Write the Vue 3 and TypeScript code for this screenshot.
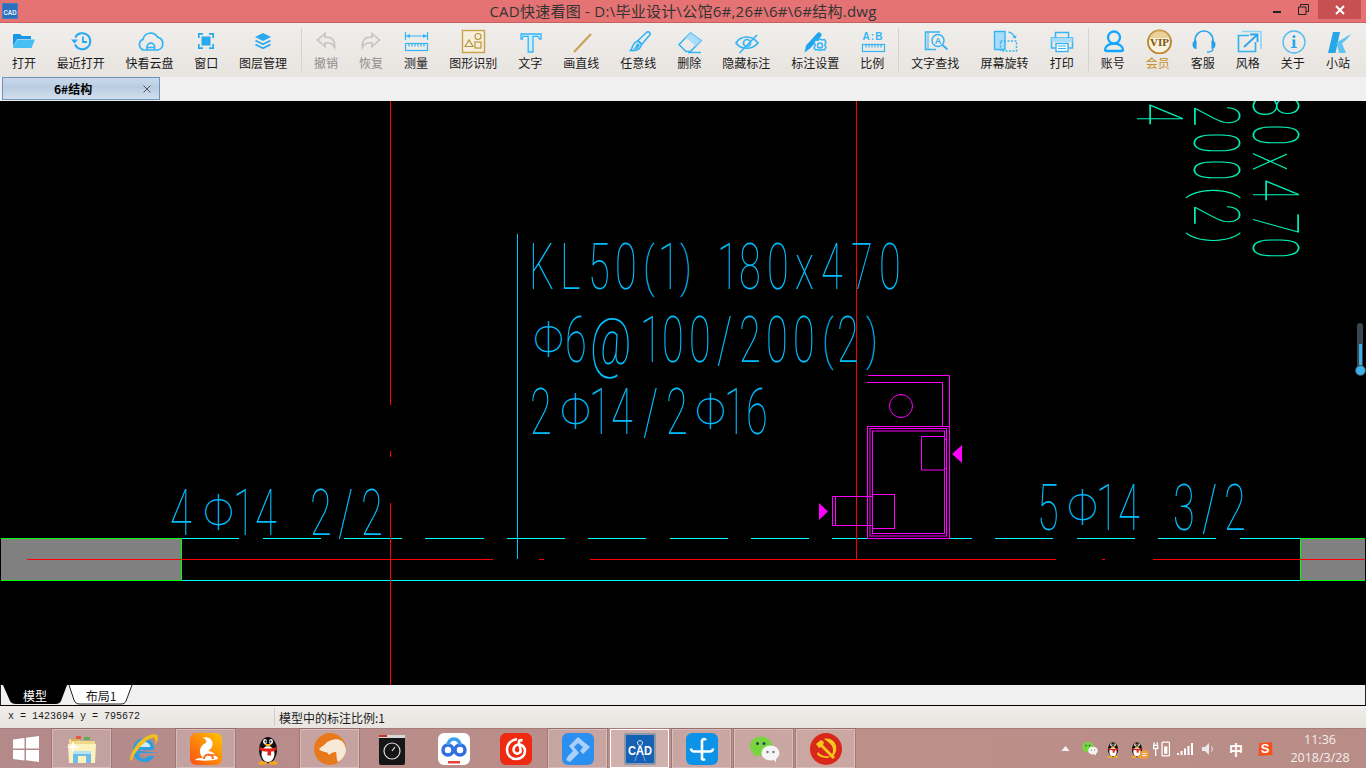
<script setup lang="ts">
interface ToolItem {
  label: string
  icon: string
  muted?: boolean
  gold?: boolean
}

const blue = '#29a9ef'

// 工具栏图标
const icons: Record<string, string> = {
  open: `<path d="M4 7a1 1 0 0 1 1-1h6l2 2h9v3H8l-4 8z" fill="#1b96e6"/><path d="M4 20l4-8.500h18L22.500 20z" fill="#45bdf5"/>`,
  recent: `<g fill="none" stroke="${blue}" stroke-width="2"><path d="M9.200 9.500A8 8 0 1 1 9 16.500"/><path d="M17 8.500V14h4" stroke-width="1.800"/></g><path d="M5 11.500h7l-3.500 4z" fill="${blue}"/>`,
  cloud: `<g fill="none" stroke="#35b4f5" stroke-width="1.700"><path d="M9.500 22a5.500 5.500 0 0 1-1.500-10.600 7.800 7.800 0 0 1 14.500-2.200A6.600 6.600 0 0 1 23 22z"/><path d="M12 22v-3a3.800 3.800 0 0 1 7.600 0v3M12 19.500h7.600"/></g>`,
  window: `<g fill="none" stroke="${blue}" stroke-width="1.700"><path d="M7.800 10V5.800H12M18 5.800h4.200V10M22.200 16v4.200H18M12 20.200H7.800V16"/></g><rect x="10.500" y="8.500" width="9" height="9" fill="${blue}"/>`,
  layers: `<path d="M15 5l8 4-8 4-8-4z" fill="${blue}"/><g fill="none" stroke="${blue}" stroke-width="1.800"><path d="M7.500 12.500l7.500 3.800 7.500-3.800"/><path d="M7.500 16.500l7.500 3.800 7.500-3.800"/></g>`,
  undo: `<path d="M14 5.500L6.500 12l7.500 6.500V15h3.500c2.500 0 4.500 1.300 6 4.500 1-6-2-10.200-7-10.200H14z" fill="none" stroke="#c4c4c4" stroke-width="1.600"/>`,
  redo: `<path d="M16 5.500L23.500 12 16 18.500V15h-3.500c-2.500 0-4.500 1.300-6 4.500-1-6 2-10.200 7-10.200H16z" fill="none" stroke="#c4c4c4" stroke-width="1.600"/>`,
  measure: `<g fill="none" stroke="#35b4f5" stroke-width="1.200"><path d="M4.500 4v8M26.500 4v8M5 8h21"/><rect x="4.500" y="15.500" width="22" height="7"/><path d="M8 15.500v3M11 15.500v3M14 15.500v3M17 15.500v3M20 15.500v3M23 15.500v3"/></g><path d="M5 8l4-2v4zM26 8l-4-2v4z" fill="#35b4f5"/>`,
  shape: `<rect x="4.500" y="2.500" width="22" height="22" fill="#f6efdc" stroke="#c9a24d" stroke-width="1.400"/><g fill="none" stroke="#b99440" stroke-width="1.200"><path d="M7 18.500l4-6.500 4 6.500z"/><circle cx="20" cy="8.500" r="3"/><rect x="17" y="14" width="6" height="6"/></g>`,
  text: `<path d="M6 6h20v5h-1.500l-1.500-2.700h-5V24h-4.800V8.300H8L7.500 11H6z" fill="#cdeefd" stroke="#35b4f5" stroke-width="1.300"/>`,
  line: `<path d="M25 6L8 24" stroke="#c9a458" stroke-width="2.200"/>`,
  pen: `<path d="M15 12.500l8.500-8a2 2 0 0 1 3 2.800L19 16z" fill="none" stroke="#35b4f5" stroke-width="1.600"/><path d="M14.500 13l4 3.500c-1 4-5 6.500-11 6 2.500-2 1.500-7.500 7-9.500z" fill="none" stroke="#35b4f5" stroke-width="1.600"/><path d="M14 15c-1 3-2 5-4 6.500 3 .3 5.500-1.500 7-4.500z" fill="#35b4f5"/>`,
  eraser: `<path d="M5 16.500L16.500 5 27 12.500 16.500 23.500H12z" fill="none" stroke="#35b4f5" stroke-width="1.600"/><path d="M12 9.500L16.500 5 27 12.500 21.500 18z" fill="#a8dcf8"/><path d="M14 24.500h13" stroke="#35b4f5" stroke-width="1.500"/>`,
  eye: `<g fill="none" stroke="#35b4f5" stroke-width="1.700"><path d="M5 15c5-8 16-8 22 0-6 7-17 7-22 0z"/><circle cx="16" cy="15" r="3.500"/><path d="M8.500 25L26 7"/></g>`,
  markset: `<path d="M4.500 24.500l1.500-7L17 5.500a2.500 2.500 0 0 1 4 3L10 20.500z" fill="#1fa5ee"/><path d="M20 11l2 1 2.500-.5 1.500 2.500-1 2v1.500l1 2-1.500 2.500-2.500-.5-2 1-2-1-2.500.5L14 20l1-2v-1.500l-1-2 1.500-2.500 2.500.5z" fill="#eee" stroke="#35b4f5" stroke-width="1.500"/><circle cx="20" cy="17.500" r="2.500" fill="none" stroke="#35b4f5" stroke-width="1.500"/>`,
  scale: `<text x="16" y="12" text-anchor="middle" font-family="Liberation Sans" font-size="10" font-weight="700" fill="#35b4f5" letter-spacing="1">A:B</text><g fill="none" stroke="#35b4f5" stroke-width="1.200"><rect x="5.500" y="16.500" width="22" height="7"/><path d="M9 16.500v3M12 16.500v3M15 16.500v3M18 16.500v3M21 16.500v3M24 16.500v3"/></g>`,
  find: `<g fill="none" stroke="#35b4f5" stroke-width="1.500"><path d="M20 4H5.500v17.500H16"/><path d="M8 4v17.500" stroke-width="1"/><circle cx="18" cy="12.500" r="6"/><path d="M22.500 17l5 4.500" stroke-width="2"/></g><text x="18" y="16" text-anchor="middle" font-family="Liberation Sans" font-size="9" font-weight="700" fill="#35b4f5">A</text>`,
  rotate: `<rect x="4.500" y="3.500" width="10.500" height="18" fill="#a8dcf8" stroke="#35b4f5" stroke-width="1.400"/><rect x="10.500" y="13" width="16" height="10" fill="none" stroke="#35b4f5" stroke-width="1.400" stroke-dasharray="2 1.500"/><path d="M18.500 4c3 .5 5 2.500 6 5.500" fill="none" stroke="#35b4f5" stroke-width="1.300"/><path d="M22.500 9.500l3.500 1 .5-3.500z" fill="#35b4f5"/>`,
  print: `<g fill="none" stroke="#35b4f5" stroke-width="1.500"><path d="M8.500 10V4.500h13V10"/><path d="M8.500 20H4.500v-10h21v10h-4"/></g><rect x="4.500" y="10" width="21" height="4" fill="#a8dcf8"/><rect x="9" y="15.500" width="12" height="8" fill="#fff" stroke="#35b4f5" stroke-width="1.400"/><path d="M11 18h8M11 20.500h8" stroke="#35b4f5"/>`,
  user: `<g fill="none" stroke="#12a8ff" stroke-width="2.300"><circle cx="16" cy="9.500" r="6"/><path d="M16 15.500c-6 0-9 3.500-9 6.500 0 1 1 1 2 1h14c1 0 2 0 2-1 0-3-3-6.500-9-6.500z"/></g>`,
  vip: `<circle cx="16.500" cy="14" r="11.500" fill="#f8f1df" stroke="#b8862e" stroke-width="1.800"/><path d="M6 10a11 11 0 0 1 21 0z" fill="#e3c47e" opacity=".7"/><text x="16.500" y="18" text-anchor="middle" font-family="Liberation Serif" font-size="11" font-weight="700" fill="#7d5410">VIP</text>`,
  headset: `<path d="M7 14v-2a9 9 0 0 1 18 0v2" fill="none" stroke="#2aa6ee" stroke-width="1.700"/><path d="M8.500 12.500v8.500C6 21 4.500 19 4.500 16.500S6 12.500 8.500 12.500zM23.500 12.500v8.500c2.500 0 4-2 4-4.500s-1.500-4-4-4z" fill="#1fa0ea"/><path d="M25 21c0 2-2 3-6 3" fill="none" stroke="#2aa6ee" stroke-width="1.300"/>`,
  style: `<path d="M16 7.500H5.500v16h17V14" fill="none" stroke="#35b4f5" stroke-width="1.700"/><path d="M9 3.500h19V21" fill="none" stroke="#8fd4f8" stroke-width="1.700"/><path d="M11 19L24 7M17 6.500h7.500V14" fill="none" stroke="#2aa6ee" stroke-width="1.800"/>`,
  about: `<circle cx="16" cy="14" r="11" fill="none" stroke="#55bcef" stroke-width="1.400"/><circle cx="16" cy="8.500" r="1.500" fill="#2aa6ee"/><path d="M14 11.500h3.300V19H19v1h-6v-1h1.700v-6.500H14z" fill="#2aa6ee"/>`,
  site: `<path d="M10 4h7l-4.500 21H5z" fill="#27a7e8"/><path d="M13.500 14.500L28 6c-2.500 4-6 7-9 9.500l4 9.500h-7z" fill="#5cc3f2"/>`
}

const toolGroups: { gap: number; items: ToolItem[] }[] = [
  {
    gap: 20.75,
    items: [
      { label: '打开', icon: 'open' },
      { label: '最近打开', icon: 'recent' },
      { label: '快看云盘', icon: 'cloud' },
      { label: '窗口', icon: 'window' },
      { label: '图层管理', icon: 'layers' }
    ]
  },
  {
    gap: 21,
    items: [
      { label: '撤销', icon: 'undo', muted: true },
      { label: '恢复', icon: 'redo', muted: true },
      { label: '测量', icon: 'measure' },
      { label: '图形识别', icon: 'shape' },
      { label: '文字', icon: 'text' },
      { label: '画直线', icon: 'line' },
      { label: '任意线', icon: 'pen' },
      { label: '删除', icon: 'eraser' },
      { label: '隐藏标注', icon: 'eye' },
      { label: '标注设置', icon: 'markset' },
      { label: '比例', icon: 'scale' }
    ]
  },
  {
    gap: 21.25,
    items: [
      { label: '文字查找', icon: 'find' },
      { label: '屏幕旋转', icon: 'rotate' },
      { label: '打印', icon: 'print' }
    ]
  },
  {
    gap: 21,
    items: [
      { label: '账号', icon: 'user' },
      { label: '会员', icon: 'vip', gold: true },
      { label: '客服', icon: 'headset' },
      { label: '风格', icon: 'style' },
      { label: '关于', icon: 'about' },
      { label: '小站', icon: 'site' }
    ]
  }
]

// CAD 文字: 每个字符单独定位
const glyphSize = 64
const baseScale = 0.62

// 个别字符的比例和 CAD 字体不同, 单独修正
const glyphTweaks: Record<string, { sx: number; sy: number; dy: number }> = {
  'Φ': { sx: 0.68, sy: 0.78, dy: -5 },
  '@': { sx: 0.7, sy: 1.05, dy: 2 },
  '(': { sx: 0.62, sy: 0.84, dy: -4 },
  ')': { sx: 0.62, sy: 0.84, dy: -4 }
}

const glyphTransform = (ch: string) => {
  const t = glyphTweaks[ch] ?? { sx: baseScale, sy: 1, dy: 0 }
  return `translate(0 ${t.dy}) scale(${t.sx} ${t.sy})`
}

const cadRuns = [
  { text: 'KL50(1)', xs: [529, 560, 588, 615, 643, 658, 680], base: 289 },
  { text: '180x470', xs: [717, 739, 767, 795, 821, 851, 879], base: 289 },
  { text: 'Φ6@100/200(2)', xs: [533, 565, 590, 640, 662, 689, 717, 739, 766, 793, 822, 837, 866], base: 362 },
  { text: '2Φ14/2Φ16', xs: [530, 560, 589, 611, 643, 666, 695, 724, 746], base: 434 },
  { text: '4Φ14', xs: [170, 203, 233, 255], base: 535 },
  { text: '2/2', xs: [310, 338, 361], base: 535 },
  { text: '5Φ14', xs: [1037, 1067, 1096, 1118], base: 530 },
  { text: '3/2', xs: [1173, 1202, 1224], base: 530 }
]

// 竖排绿色文字: 基线在左侧, 向下书写
const sideRuns = [
  { text: '80x470', base: 1253, ys: [95, 124, 152, 179, 213, 237] },
  { text: '200(2)', base: 1194, ys: [105, 132, 159, 187, 204, 232] },
  { text: '4', base: 1137, ys: [103] }
]

const cadGlyphs = cadRuns.flatMap(run =>
  [...run.text].map((ch, i) => ({
    ch,
    transform: `translate(${run.xs[i]} ${run.base}) ${glyphTransform(ch)}`
  }))
)

const sideGlyphs = sideRuns.flatMap(run =>
  [...run.text].map((ch, i) => ({
    ch,
    transform: `translate(${run.base} ${run.ys[i]}) rotate(90) ${glyphTransform(ch)}`
  }))
)

const dashes: number[][] = [
  [182, 239], [263, 321], [344, 402], [425, 484], [507, 565], [588, 646], [670, 728],
  [751, 809], [832, 868], [949, 972], [995, 1053], [1077, 1135], [1158, 1216], [1240, 1300]
]
const redDashes: number[][] = [[27, 493], [539, 544], [590, 1056], [1102, 1105], [1153, 1365]]

const penguin = `<ellipse cx="16" cy="17" rx="9" ry="13" fill="#111"/><ellipse cx="16" cy="21" rx="6.500" ry="8" fill="#fff"/><ellipse cx="13" cy="8.500" rx="2" ry="2.500" fill="#fff"/><ellipse cx="19" cy="8.500" rx="2" ry="2.500" fill="#fff"/><circle cx="13.500" cy="8.500" r="1" fill="#111"/><circle cx="18.500" cy="8.500" r="1" fill="#111"/><path d="M12 11h8l-4 3z" fill="#f5b81f"/><path d="M7.500 14c5 2 12 2 17 0v3c-2 1-4 1.500-5.500 1.500v4h-3.500v-4c-3 0-6-.5-8-1.500z" fill="#e2231a"/><ellipse cx="10.500" cy="30" rx="4.500" ry="1.800" fill="#f5a81c"/><ellipse cx="21.500" cy="30" rx="4.500" ry="1.800" fill="#f5a81c"/>`
const wechat = `<ellipse cx="13" cy="13" rx="11" ry="9.500" fill="#7ad43f"/><path d="M6 19l-1 5 6-3z" fill="#7ad43f"/><circle cx="9.500" cy="10.500" r="1.500" fill="#245"/><circle cx="16" cy="10.500" r="1.500" fill="#245"/><ellipse cx="22.500" cy="20" rx="9" ry="7.500" fill="#f4f4f4"/><path d="M25 26l3 3.500v-5z" fill="#f4f4f4"/><circle cx="19.500" cy="19" r="1.200" fill="#777"/><circle cx="25.500" cy="19" r="1.200" fill="#777"/>`

interface TaskApp {
  id: string
  on?: boolean
  active?: boolean
  svg: string
}

// 任务栏图标, viewBox 0 0 32 32
const taskApps: TaskApp[] = [
  {
    id: 'explorer',
    on: true,
    svg: `<path d="M3 6h9l2 2h15v8H3z" fill="#efd98a"/><path d="M5 6h7l1 2H5z" fill="#d9b04a"/><rect x="10" y="3" width="5" height="3" fill="#e05a3a"/><rect x="18" y="4" width="6" height="3" fill="#5ab04a"/><path d="M2 11h28l-1 19H3z" fill="#fdf2bd"/><path d="M7 18h18v12h-5v-7h-8v7H7z" fill="#6cbcec"/><path d="M7 18h18v3H7z" fill="#b6e2f8"/><path d="M7 8l2 5 5 1-5 1-2 5-2-5-5-1 5-1z" fill="#fff" opacity=".85"/>`
  },
  {
    id: 'ie',
    svg: `<path d="M5 17h21c.5-7-4-12-10-12S5 10 5 17c0 7 5 12 11 12 5 0 8.500-2 10-6h-6c-1 1.800-2.500 2.500-4 2.500-3 0-5-2-5-5.500h20" fill="#2a9ee0"/><path d="M9.500 14h13c-.5-3-3-5-6.500-5s-6 2-6.500 5z" fill="#cfeafa"/><path d="M4 27C0 31 2 19 11 9 19 1 30-1 30 4c.5 3-2 7-3 8 .5-3 1-6-1-7C22 3 8 16 4 27z" fill="#f0c020"/>`
  },
  {
    id: 'uc',
    on: true,
    svg: `<defs><linearGradient id="ucg" x1="0" y1="1" x2="1" y2="0"><stop offset="0" stop-color="#fb4f14"/><stop offset="1" stop-color="#ffc400"/></linearGradient></defs><rect width="32" height="32" rx="6" fill="url(#ucg)"/><path d="M5 27c5 1 18 1 23-1-2-5-6-8-10-8 3-2 6-5 4-10-1-3-6-5-10-3 3 0 5 2 4 5-3 1-6 4-6 8 0 3 1 5 3 7-3 0-6 0-8 2z" fill="#fff"/><path d="M14 26a4 4 0 0 1 9 0" fill="none" stroke="#fb6a1a" stroke-width="2"/><path d="M18 22h9" stroke="#fb6a1a" stroke-width="1.500"/>`
  },
  { id: 'qq', svg: penguin },
  {
    id: 'cheetah',
    on: true,
    svg: `<circle cx="16" cy="16" r="16" fill="#e8791a"/><path d="M5 16c3-3 6-4 8-7 5-3 11-4 15-1 3 3 4 7 4 10-1 5-4 9-8 11-2-3-1-7-2-10-3 0-5 1-7 3-1-2-2-3-4-3-2-1-5-1-6-3z" fill="#f7e8d8"/>`
  },
  {
    id: 'camera',
    svg: `<rect x="3" y="2" width="26" height="30" rx="2" fill="#161616"/><rect x="3" y="2" width="26" height="3" fill="#d8d8d8"/><path d="M3 2h8v2H3z" fill="#c4342a"/><circle cx="16" cy="18" r="8" fill="none" stroke="#ddd" stroke-width="1.200"/><path d="M16 18l3-4" stroke="#ddd" stroke-width="1.200"/>`
  },
  {
    id: 'baidu',
    svg: `<rect width="32" height="32" rx="6" fill="#fff"/><g fill="none" stroke-width="3.500"><circle cx="10" cy="17" r="5" stroke="#2f6fe0"/><circle cx="22" cy="17" r="5" stroke="#2f6fe0"/><path d="M10 12a6 6 0 0 1 12 0" stroke="#3aa0f0"/></g><rect x="10" y="28" width="12" height="2.500" fill="#e8443a"/>`
  },
  {
    id: 'netease',
    svg: `<rect width="32" height="32" rx="6" fill="#ef2a12"/><g fill="none" stroke="#fff" stroke-width="2.600"><path d="M17 6c-6 1-10 5-10 11 0 5 4 9 9 9s9-3.500 9-8c0-4-3-6.500-6-6.500-3.500 0-5.500 2.500-5.500 5s2 4.500 4.500 4c2-.5 3-2 2.500-4L19 9.500c-.5-2 1-3 3.500-2"/></g>`
  },
  {
    id: 'key',
    on: true,
    svg: `<rect width="32" height="32" rx="6" fill="#2b8ff0"/><path d="M7 13L16 4l12 10-7 7-3-3 3-4-5-4-4 4 5 6-9 9-4-2 2-4 5-5z" fill="#a8d0fa"/>`
  },
  {
    id: 'cad',
    active: true,
    svg: `<rect width="32" height="32" rx="2" fill="#8a98a8"/><rect x="2" y="2" width="28" height="28" fill="#1761b5"/><circle cx="16" cy="10" r="2.500" fill="none" stroke="#cfe3f7"/><path d="M16 12l-5 16M16 12l5 16" stroke="#6ea4dc"/><text x="16" y="22" text-anchor="middle" font-family="Liberation Sans" font-size="12" font-weight="700" fill="#fff" textLength="24" lengthAdjust="spacingAndGlyphs">CAD</text>`
  },
  {
    id: 'cross',
    on: true,
    svg: `<rect width="32" height="32" rx="6" fill="#0c93e8"/><g fill="none" stroke="#fff" stroke-width="2.600"><path d="M16 7v19a2.500 2.500 0 0 0 3 0"/><path d="M16 7a2.500 2.500 0 0 1 4 0"/><path d="M5 15.500a3 3 0 0 0 3 3h16a3 3 0 0 0 3-3"/></g>`
  },
  { id: 'wechat', on: true, svg: wechat },
  {
    id: 'party',
    on: true,
    svg: `<circle cx="16" cy="16" r="16" fill="#d9281a"/><path d="M14 6c6-2 14 3 12 12-1 4-4 6-6 7 3-4 4-8 2-12-2-3-5-5-8-7z" fill="#f6c81e"/><path d="M6 11l5-4 3 2-1 3 12 12-2 2-12-12-2 1z" fill="#f6c81e"/><path d="M8 19c3 4 7 5 12 4l-2 2c-4 0-9-1-11-4z" fill="#f6c81e"/>`
  }
]
</script>

<template>
  <div class="app">
    <header class="titlebar">
      <svg class="app-logo" viewBox="0 0 16 16" width="16" height="16">
        <rect width="16" height="16" rx="1" fill="#2c6fbe" stroke="#7d9cc4" stroke-width=".6" />
        <text x="8" y="11.500" text-anchor="middle" font-family="Liberation Sans" font-size="7" font-weight="700" fill="#e8f2fb" textLength="13" lengthAdjust="spacingAndGlyphs">CAD</text>
      </svg>
      <span class="title">CAD快速看图 - D:\毕业设计\公馆6#,26#\6#\6#结构.dwg</span>
      <div class="win-buttons">
        <svg viewBox="0 0 8 3" width="8" height="3" class="btn-min"><rect width="8" height="2" fill="#222" /></svg>
        <svg viewBox="0 0 11 11" width="11" height="11" class="btn-max">
          <path d="M2.500 2.500V.5h8v7h-2M.5 3h7.500v7.500H.5z" fill="none" stroke="#222" />
        </svg>
        <div class="btn-close">
          <svg viewBox="0 0 10 10" width="10" height="10"><path d="M1 1l8 8M9 1l-8 8" stroke="#fff" stroke-width="2" /></svg>
        </div>
      </div>
    </header>

    <nav class="toolbar">
      <template v-for="(group, gi) in toolGroups" :key="gi">
        <div v-if="gi > 0" class="tool-sep"></div>
        <div class="tool-group" :style="{ gap: group.gap + 'px' }">
          <div v-for="item in group.items" :key="item.label" class="tool" :class="{ muted: item.muted, gold: item.gold }">
            <svg class="tool-icon" viewBox="0 0 30 26" width="30" height="26" v-html="icons[item.icon]"></svg>
            <span>{{ item.label }}</span>
          </div>
        </div>
      </template>
    </nav>

    <div class="filetabs">
      <div class="filetab">
        <span class="filetab-name">6#结构</span>
        <svg viewBox="0 0 8 8" width="8" height="8"><path d="M.5.5l7 7M7.500.5l-7 7" stroke="#555" /></svg>
      </div>
    </div>

    <main class="canvas">
      <svg class="drawing" viewBox="0 101 1366 584" width="1366" height="584">
        <!-- 梁 -->
        <rect x="1" y="538" width="181" height="43" fill="#808080" />
        <rect x="1300" y="538" width="65" height="43" fill="#808080" />
        <path d="M1 538.500H181.500V580.500H1M1365 538.500H1300.500V580.500H1365" fill="none" stroke="#00ff00" />
        <line x1="182" y1="580.500" x2="1300" y2="580.500" stroke="#00ffff" />
        <line v-for="d in dashes" :key="d[0]" :x1="d[0]" y1="538.500" :x2="d[1]" y2="538.500" stroke="#00ffff" />
        <line v-for="d in redDashes" :key="d[0]" :x1="d[0]" y1="559.500" :x2="d[1]" y2="559.500" stroke="#ff0000" />
        <line x1="517.500" y1="234" x2="517.500" y2="559" stroke="#00bfff" />

        <!-- 红色轴线 -->
        <path d="M390.500 101V405M390.500 451V457M390.500 503V685M856.500 101V559" stroke="#ff0000" fill="none" />

        <!-- 截面 -->
        <g fill="none" stroke="#ff00ff">
          <path d="M868 375.500H949.500V426" />
          <path d="M867 382.500H942.500V426" />
          <circle cx="901" cy="406" r="11.500" />
          <rect x="867.500" y="426.500" width="82" height="112" />
          <rect x="870" y="428.500" width="76.500" height="107.500" />
          <rect x="872.500" y="431" width="72" height="102.500" />
          <path d="M944.500 436.500H921.500V470H944.500M944.500 439.500H947M944.500 468.500H947" />
          <rect x="872.500" y="494.500" width="22" height="34" />
          <path d="M872.500 496.500H832.500V525.500H872.500M835.500 496.500V525.500" />
        </g>
        <path d="M952 454L962 445V463zM819 503V520L828 511.500z" fill="#ff00ff" />

        <!-- 标注文字 -->
        <g class="cad-text" fill="#00bfff">
          <text v-for="(g, i) in cadGlyphs" :key="i" :transform="g.transform" :font-size="glyphSize">{{ g.ch }}</text>
        </g>
        <g class="cad-text" fill="#00eeb4">
          <text v-for="(g, i) in sideGlyphs" :key="i" :transform="g.transform" :font-size="glyphSize">{{ g.ch }}</text>
        </g>
      </svg>

      <div class="zoom-slider">
        <div class="zoom-fill"></div>
        <div class="zoom-knob"></div>
      </div>
    </main>

    <div class="layout-tabs">
      <div class="ltab ltab-on">
        <svg viewBox="0 0 66 20" width="66" height="20"><path d="M1 0h64l-6 16c-1 2-3 3-5 3H14c-3 0-5-1-6-3z" fill="#000" /></svg>
        <span>模型</span>
      </div>
      <div class="ltab ltab-off">
        <svg viewBox="0 0 66 20" width="66" height="20"><path d="M1 0l5 15c1 3 3 4 6 4h41c3 0 4-1 5-3l6-16" fill="#fff" stroke="#222" /></svg>
        <span>布局1</span>
      </div>
    </div>

    <footer class="statusbar">
      <span class="coords">x = 1423694 y = 795672</span>
      <span class="scale-note">模型中的标注比例:1</span>
    </footer>

    <div class="taskbar">
      <div class="start">
        <svg viewBox="0 0 26 26" width="26" height="26">
          <path d="M0 3.500L11.500 2v10.500H0zM13 1.800L26 0v12.500H13zM0 14h11.500v10.500L0 23zM13 14h13v12l-13-1.800z" fill="#fff" />
        </svg>
      </div>
      <div class="apps">
        <div v-for="app in taskApps" :key="app.id" class="app-slot" :class="{ on: app.on, active: app.active }">
          <svg viewBox="0 0 32 32" width="32" height="32" v-html="app.svg"></svg>
        </div>
      </div>
      <div class="tray">
        <div class="tray-item"><svg viewBox="0 0 10 6" width="9" height="5"><path d="M5 0l5 6H0z" fill="#f2f2f2" /></svg></div>
        <div class="tray-item"><svg viewBox="0 0 32 32" width="17" height="17" v-html="wechat"></svg></div>
        <div class="tray-item"><svg viewBox="0 0 32 32" width="18" height="18" v-html="penguin"></svg></div>
        <div class="tray-item msg">
          <svg viewBox="0 0 32 32" width="18" height="18" v-html="penguin"></svg>
          <i class="msg-dot">=</i>
        </div>
        <div class="tray-item">
          <svg viewBox="0 0 16 16" width="17" height="17">
            <g fill="none" stroke="#fff" stroke-width="1.200">
              <rect x="8.500" y="2" width="7" height="13" rx="1" />
              <path d="M1 2v3M4 2v3M.5 5h4v3h-4zM2.500 8v7" />
            </g>
            <rect x="10.500" y="6" width="3" height="7" fill="#fff" />
          </svg>
        </div>
        <div class="tray-item">
          <svg viewBox="0 0 16 12" width="16" height="12"><path d="M0 10h2v2H0zM3.500 8h2v4h-2zM7 5.500h2V12H7zM10.500 3h2v9h-2zM14 0h2v12h-2z" fill="#fff" /></svg>
        </div>
        <div class="tray-item">
          <svg viewBox="0 0 14 14" width="14" height="14"><path d="M0 5h3l4-4v12L3 9H0z" fill="#e8e8e8" /><path d="M9.500 4.500a4 4 0 0 1 0 5" fill="none" stroke="#e8e8e8" /></svg>
        </div>
        <div class="tray-item ime">中</div>
        <div class="tray-item sogou"><svg viewBox="0 0 16 16" width="16" height="16"><path d="M2 2l13-1 .5 13L1.500 15z" fill="#f4511e" /></svg><b>S</b></div>
      </div>
      <div class="clock">
        <span>11:36</span>
        <span>2018/3/28</span>
      </div>
    </div>
  </div>
</template>

<style scoped>
.app {
  width: 1366px;
  height: 768px;
  display: flex;
  flex-direction: column;
  overflow: hidden;
  font-family: "Noto Sans CJK SC", "Liberation Sans", sans-serif;
  font-size: 12px;
  color: #1a1a1a;
}

.titlebar {
  height: 23px;
  box-sizing: border-box;
  flex: none;
  position: relative;
  display: flex;
  justify-content: center;
  background: #e57373;
  border-bottom: 1px solid #c65f5f;
}
.app-logo {
  position: absolute;
  left: 2px;
  top: 3px;
}
.title {
  font-family: "Open Sans", "Noto Sans CJK SC", sans-serif;
  font-size: 15px;
  letter-spacing: 0.25px;
  line-height: 23px;
  color: #333;
}
.win-buttons {
  position: absolute;
  right: 5px;
  top: 0;
  display: flex;
  align-items: flex-start;
}
.btn-min {
  margin: 11px 17px 0 0;
}
.btn-max {
  margin: 4px 9px 0 0;
}
.btn-close {
  width: 43px;
  height: 19px;
  background: #c75050;
  display: flex;
  align-items: center;
  justify-content: center;
}

.toolbar {
  height: 54px;
  flex: none;
  box-sizing: border-box;
  display: flex;
  padding: 5px 0 0 12px;
  background: linear-gradient(#f0eeeb, #e8e4e0);
}
.tool-group {
  display: flex;
}
.tool-sep {
  width: 1px;
  height: 44px;
  margin: 0 12px 0 14px;
  background: #d6d3cf;
}
.tool {
  display: flex;
  flex-direction: column;
  align-items: center;
  line-height: 16px;
  white-space: nowrap;
}
.tool.muted {
  color: #8e8e8e;
}
.tool.gold {
  color: #c8912e;
}
.tool-icon {
  margin: 0 -3px 1px;
  flex: none;
}

.filetabs {
  height: 24px;
  flex: none;
  box-sizing: border-box;
  padding: 0 0 1px 2px;
  background: #f0f0f0;
}
.filetab {
  width: 158px;
  height: 23px;
  box-sizing: border-box;
  display: flex;
  align-items: center;
  justify-content: space-between;
  padding: 0 8px 0 51px;
  border: 1px solid #6d94c0;
  background: linear-gradient(#c9d9ea, #b9cde2 45%, #d2dfec);
}
.filetab-name {
  font-weight: 700;
  color: #000;
}

.canvas {
  height: 584px;
  flex: none;
  position: relative;
  background: #000;
}
.drawing {
  display: block;
}
.cad-text text {
  font-family: "Roboto", "Liberation Sans", sans-serif;
  font-weight: 100;
}
.zoom-slider {
  position: absolute;
  left: 1357px;
  top: 222px;
  width: 6px;
  height: 52px;
  border-radius: 3px;
  background: #37474f;
}
.zoom-fill {
  position: absolute;
  left: 1.500px;
  top: 21px;
  width: 3px;
  height: 28px;
  background: #3db0e8;
}
.zoom-knob {
  position: absolute;
  left: -2.500px;
  top: 42px;
  width: 9px;
  height: 9px;
  border-radius: 50%;
  background: #3db0e8;
  border: 1px solid #37474f;
}

.layout-tabs {
  height: 21px;
  flex: none;
  box-sizing: border-box;
  display: flex;
  padding-left: 1px;
  background: #f0f0f0;
  border-left: 1px solid #222;
  border-bottom: 1px solid #000;
  border-right: 1px solid #222;
}
.ltab {
  position: relative;
  width: 66px;
  height: 20px;
  display: flex;
  align-items: center;
  justify-content: center;
}
.ltab svg {
  position: absolute;
  left: 0;
  top: 0;
}
.ltab span {
  position: relative;
}
.ltab-on {
  color: #fff;
}
.statusbar {
  height: 22px;
  flex: none;
  box-sizing: border-box;
  display: flex;
  align-items: center;
  background: linear-gradient(#f0eeeb, #e8e4e0);
}
.coords {
  width: 275px;
  box-sizing: border-box;
  padding-left: 8px;
  font-family: "Liberation Mono", monospace;
  font-size: 10px;
  line-height: 18px;
  border-right: 1px solid #d0cdc9;
}
.scale-note {
  margin-left: 4px;
}

.taskbar {
  height: 40px;
  flex: none;
  display: flex;
  background: linear-gradient(90deg, #b4898a, #bd918a 60%, #b98d87);
  border-top: 1px solid #a87c78;
  box-sizing: border-box;
}
.start {
  width: 52px;
  flex: none;
  display: flex;
  align-items: center;
  justify-content: center;
}
.apps {
  display: flex;
  gap: 3px;
}
.app-slot {
  width: 59px;
  height: 39px;
  box-sizing: border-box;
  display: flex;
  align-items: center;
  justify-content: center;
  border: 1px solid transparent;
}
.app-slot.on {
  background: rgba(255, 255, 255, 0.2);
  border-color: rgba(255, 255, 255, 0.28);
  box-shadow: 0 0 0 1px rgba(120, 80, 80, 0.35);
}
.app-slot.active {
  background: rgba(255, 255, 255, 0.3);
  border-color: #fff;
}
.tray {
  margin-left: auto;
  display: flex;
  align-items: center;
}
.tray-item {
  position: relative;
  width: 24px;
  height: 24px;
  display: flex;
  align-items: center;
  justify-content: center;
}
.tray-item.ime {
  margin-left: 3px;
  color: #fff;
  font-size: 14px;
  font-weight: 700;
}
.tray-item.sogou {
  margin-left: 5px;
}
.sogou b {
  position: absolute;
  color: #fff;
  font: 700 13px/16px "Liberation Sans", sans-serif;
}
.msg-dot {
  position: absolute;
  right: 0;
  bottom: 2px;
  width: 9px;
  height: 9px;
  border-radius: 50%;
  background: #f79a3e;
  color: #fff;
  font: 700 8px/9px "Liberation Sans", sans-serif;
  text-align: center;
}
.clock {
  width: 92px;
  margin-left: -3px;
  flex: none;
  display: flex;
  flex-direction: column;
  align-items: center;
  justify-content: center;
  gap: 2px;
  color: #f4eeee;
  font-family: "Open Sans", sans-serif;
  font-size: 12.500px;
  line-height: 16px;
}
</style>

<style>
html,
body {
  margin: 0;
  background: #000;
}
</style>
